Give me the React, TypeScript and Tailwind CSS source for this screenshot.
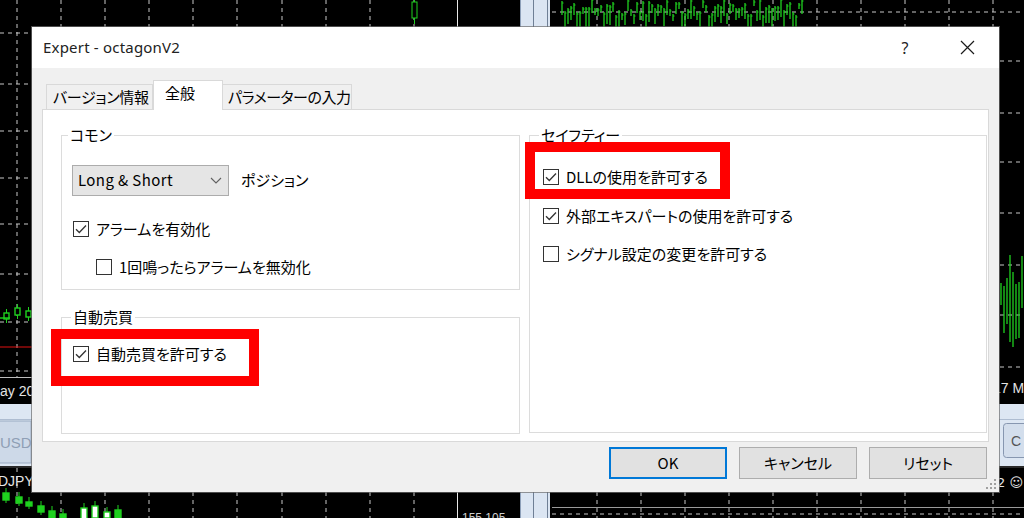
import React from "react";

function cx(...classes: Array<string | false | null | undefined>) {
  return classes.filter(Boolean).join(" ");
}

function rnd(i: number) {
  const x = Math.sin(i * 12.9898 + 78.233) * 43758.5453;
  return x - Math.floor(x);
}

const GRID = "#c8c8c8";
const GREEN = "#1fd11f";

// chart windows behind the dialog (MT4 workspace)
function Backdrop() {
  const leftV = [17, 61, 105, 149, 193, 237, 282, 326, 370, 414];
  const leftH = [33, 84, 131, 178, 224, 274, 322, 371];
  const rightV = [597, 641, 685, 729, 773, 817, 861, 905, 949, 993];
  const rightH = [12, 61, 113, 162, 213, 265, 315, 367];

  const topBars = Array.from({ length: 81 }, (_, i) => {
    const top = Math.round(rnd(i) * 17) - 2;
    const len = 5 + Math.round(rnd(i + 300) * 16);
    return { x: 562 + i * 3, top, bottom: Math.min(27, top + len) };
  });

  const rightBars = Array.from({ length: 9 }, (_, i) => {
    const top = 252 + Math.round(rnd(i + 40) * 40);
    const bottom = 300 + Math.round(rnd(i + 80) * 62);
    return { x: 1001 + i * 3, top, bottom };
  });

  const leftCandles = [
    { x: 4, y: 313, h: 6, fill: "none" },
    { x: 15, y: 308, h: 7, fill: "none" },
    { x: 26, y: 311, h: 6, fill: "none" },
  ];

  const bottomCandles = [
    { x: 3, y: 493, h: 7, fill: GREEN },
    { x: 16, y: 497, h: 6, fill: GREEN },
    { x: 26, y: 502, h: 4, fill: GREEN },
    { x: 38, y: 506, h: 6, fill: GREEN },
    { x: 49, y: 511, h: 7, fill: GREEN },
    { x: 60, y: 514, h: 6, fill: GREEN },
    { x: 81, y: 508, h: 11, fill: "#ffffff" },
    { x: 92, y: 506, h: 12, fill: "#ffffff" },
    { x: 104, y: 512, h: 6, fill: "#ffffff" },
    { x: 115, y: 510, h: 9, fill: GREEN },
  ];

  return (
    <svg
      className="absolute inset-0"
      width="1024"
      height="518"
      viewBox="0 0 1024 518"
      aria-hidden="true"
    >
      <rect width="1024" height="518" fill="#000" />

      {/* left charts grid */}
      {leftV.map((x) => (
        <line key={"lv" + x} x1={x} y1={0} x2={x} y2={377} stroke={GRID} strokeDasharray="4 4" />
      ))}
      {leftV.map((x) => (
        <line key={"lb" + x} x1={x} y1={468} x2={x} y2={518} stroke={GRID} strokeDasharray="4 4" />
      ))}
      {leftH.map((y) => (
        <line key={"lh" + y} x1={0} y1={y} x2={456} y2={y} stroke={GRID} strokeDasharray="4 4" />
      ))}
      <line x1={0} y1={347} x2={456} y2={347} stroke="#e01010" strokeWidth="1.2" />
      <line x1={0} y1={377.5} x2={520} y2={377.5} stroke="#bdbdbd" />
      <line x1={457.5} y1={0} x2={457.5} y2={377} stroke="#e8e8e8" />
      <line x1={457.5} y1={468} x2={457.5} y2={518} stroke="#e8e8e8" />

      {/* candle left top */}
      <line x1={414.5} y1={0} x2={414.5} y2={24} stroke={GREEN} />
      <rect x={412} y={2} width={5} height={16} fill="#000" stroke={GREEN} />

      {leftCandles.map((c) => (
        <g key={"lc" + c.x}>
          <line x1={c.x + 2.5} y1={c.y - 4} x2={c.x + 2.5} y2={c.y + c.h + 4} stroke={GREEN} />
          <rect x={c.x} y={c.y} width={5} height={c.h} fill="#000" stroke={GREEN} strokeWidth="1.4" />
        </g>
      ))}
      <line x1={0} y1={318} x2={10} y2={318} stroke={GREEN} strokeWidth="1.4" />

      {bottomCandles.map((c) => (
        <g key={"bc" + c.x}>
          <line x1={c.x + 3} y1={c.y - 5} x2={c.x + 3} y2={c.y + c.h + 3} stroke={GREEN} />
          <rect x={c.x} y={c.y} width={6} height={c.h} fill={c.fill} stroke={GREEN} strokeWidth="1.4" />
        </g>
      ))}

      <text x={0} y={396} fontFamily="Liberation Sans" fontSize="14" fill="#e4e4e4">
        ay 2021
      </text>
      <text x={-2} y={486} fontFamily="Liberation Sans" fontSize="14" fill="#e4e4e4">
        DJPY,H1
      </text>
      <text x={462} y={522} fontFamily="Liberation Sans" fontSize="12" fill="#d0d0d0">
        155.105
      </text>

      {/* vertical splitter between chart columns */}
      <rect x={520} y={0} width={30} height={518} fill="#dbe5f2" />
      <line x1={520.5} y1={0} x2={520.5} y2={518} stroke="#8d9fb8" />
      <line x1={533.5} y1={0} x2={533.5} y2={518} stroke="#6f7f95" />
      <line x1={547.5} y1={0} x2={547.5} y2={518} stroke="#6f7f95" />

      {/* right charts grid */}
      {rightV.map((x) => (
        <line key={"rv" + x} x1={x} y1={0} x2={x} y2={377} stroke={GRID} strokeDasharray="4 4" />
      ))}
      {rightV.map((x) => (
        <line key={"rb" + x} x1={x} y1={468} x2={x} y2={518} stroke={GRID} strokeDasharray="4 4" />
      ))}
      {rightH.map((y) => (
        <line key={"rh" + y} x1={552} y1={y} x2={1024} y2={y} stroke={GRID} strokeDasharray="4 4" />
      ))}
      <line x1={552} y1={507.5} x2={1024} y2={507.5} stroke="#9a9a9a" />
      <line x1={552} y1={514} x2={1024} y2={514} stroke={GRID} strokeDasharray="4 4" />

      {topBars.map((b) => (
        <g key={"tb" + b.x}>
          <line x1={b.x} y1={b.top} x2={b.x} y2={b.bottom} stroke={GREEN} strokeWidth="1.3" />
          <line x1={b.x} y1={b.top + 2} x2={b.x + 1.5} y2={b.top + 2} stroke={GREEN} />
        </g>
      ))}
      {rightBars.map((b) => (
        <line key={"rb2" + b.x} x1={b.x} y1={b.top} x2={b.x} y2={b.bottom} stroke={GREEN} strokeWidth="1.3" />
      ))}

      <text x={993} y={393} fontFamily="Liberation Sans" fontSize="14" fill="#e4e4e4">
        17 May
      </text>
      <text x={1023} y={487} textAnchor="end" fontFamily="DejaVu Sans" fontSize="13" fill="#e4e4e4">
        V2 ☺
      </text>

      {/* chart tab bar */}
      <rect x={0} y={404} width={1024} height={62} fill="#dde7f3" />
      <line x1={0} y1={419.5} x2={1024} y2={419.5} stroke="#aebdd1" />
      <rect x={-8} y={421} width={39} height={42} fill="#cdd9e8" stroke="#9aabc2" />
      <text x={0} y={448} fontFamily="Liberation Sans" fontSize="15" fill="#8f9fb5">
        USDJ
      </text>
      <rect x={1003.5} y={423.5} width={30} height={34} rx="3" fill="#d3deec" stroke="#8797b0" />
      <text x={1011} y={446} fontFamily="Liberation Sans" fontSize="14" fill="#555">
        C
      </text>
      <rect x={0} y={466} width={1024} height={2} fill="#2a2a2a" />
    </svg>
  );
}

function Check({ label, checked, className }: { label: string; checked?: boolean; className?: string }) {
  return (
    <div className={cx("flex h-[20px] items-center gap-[7px]", className)}>
      <span className="flex h-[16px] w-[16px] shrink-0 items-center justify-center border border-[#333333] bg-white">
        {checked && (
          <svg width="12" height="10" viewBox="0 0 12 10" fill="none" aria-hidden="true">
            <path d="M1 5.2 4.3 8.5 11 1.5" stroke="#333333" strokeWidth="1.3" />
          </svg>
        )}
      </span>
      <span className="whitespace-nowrap text-[15px] leading-[20px] text-black">{label}</span>
    </div>
  );
}

function Group({
  title,
  titleLeft,
  className,
  children,
}: {
  title: string;
  titleLeft: string;
  className?: string;
  children?: React.ReactNode;
}) {
  return (
    <div className={cx("relative border border-[#dcdcdc]", className)}>
      <span
        className={cx(
          "absolute top-[-11px] bg-white px-[2px] text-[15px] leading-[20px] whitespace-nowrap text-black",
          titleLeft
        )}
      >
        {title}
      </span>
      {children}
    </div>
  );
}

function Button({ label, primary }: { label: string; primary?: boolean }) {
  return (
    <div
      className={cx(
        "flex h-[32px] w-[118px] items-center justify-center bg-[#e1e1e1] text-[15px] text-black",
        primary ? "border-2 border-[#0078d7]" : "border border-[#adadad]"
      )}
    >
      {label}
    </div>
  );
}

export default function App() {
  return (
    <div className="relative h-[518px] w-[1024px] overflow-hidden bg-black">
      <Backdrop />

      <div className="absolute left-[32px] top-[27px] flex h-[465px] w-[967px] flex-col bg-[#f0f0f0] font-['Noto_Sans_CJK_JP',sans-serif] shadow-[0_0_0_1px_rgba(110,110,110,0.7)] [font-feature-settings:'palt']">
        {/* title bar */}
        <div className="flex h-[41px] shrink-0 items-center bg-white pl-[11px]">
          <span className="font-['Noto_Sans',sans-serif] text-[15px] tracking-[0.2px] text-[#222222]">Expert - octagonV2</span>
          <div className="ml-auto mr-[1px] flex h-full items-center">
            <span className="flex w-[62px] justify-center font-['Noto_Sans',sans-serif] text-[16px] text-[#222222]">?</span>
            <span className="flex w-[62px] justify-center">
              <svg width="15" height="15" viewBox="0 0 15 15" aria-hidden="true">
                <path d="M1 1 14 14M14 1 1 14" stroke="#1a1a1a" strokeWidth="1.2" />
              </svg>
            </span>
          </div>
        </div>

        {/* tabs */}
        <div className="relative z-10 mt-[12px] flex h-[30px] items-end pl-[14px]">
          <div className="mb-[1px] flex h-[25px] w-[107px] items-center whitespace-nowrap border border-b-0 border-[#d9d9d9] pl-[6px] text-[15px] tracking-[-0.3px] text-black">
            バージョン情報
          </div>
          <div className="flex h-[30px] w-[70px] items-center border border-b-0 border-[#d9d9d9] bg-white pb-[4px] pl-[11px] text-[15px] text-black">
            全般
          </div>
          <div className="mb-[1px] flex h-[25px] w-[129px] items-center overflow-hidden whitespace-nowrap border border-b-0 border-l-0 border-[#d9d9d9] pl-[5px] text-[15px] tracking-[-0.5px] text-black">
            パラメーターの入力
          </div>
        </div>

        {/* tab panel */}
        <div className="mx-[10px] -mt-[1px] h-[333px] shrink-0 border border-[#d9d9d9] bg-white">
          <div className="grid grid-cols-[459px_458px] gap-x-[9px] pl-[18px] pt-[25px]">
            <div className="flex flex-col">
              <Group title="コモン" titleLeft="left-[6px]" className="h-[155px] pl-[10px] pt-[29px]">
                <div className="flex items-center gap-[12px]">
                  <div className="flex h-[31px] w-[157px] items-center border border-[#acacac] bg-[#e5e5e5] pl-[5px] pr-[6px]">
                    <span className="text-[15px] tracking-[0.4px] text-black">Long &amp; Short</span>
                    <svg className="ml-auto" width="12" height="7" viewBox="0 0 12 7" fill="none" aria-hidden="true">
                      <path d="M1 1 6 6 11 1" stroke="#606060" strokeWidth="1.1" />
                    </svg>
                  </div>
                  <span className="text-[15px] text-black">ポジション</span>
                </div>
                <Check label="アラームを有効化" checked className="ml-[1px] mt-[23px]" />
                <Check label="1回鳴ったらアラームを無効化" className="ml-[24px] mt-[18px]" />
              </Group>

              <Group title="自動売買" titleLeft="left-[9px]" className="mt-[27px] h-[117px] pl-[11px] pt-[26px]">
                <Check label="自動売買を許可する" checked />
              </Group>
            </div>

            <Group title="セイフティー" titleLeft="left-[9px]" className="h-[298px] pl-[13px] pt-[31px]">
              <Check label="DLLの使用を許可する" checked />
              <Check label="外部エキスパートの使用を許可する" checked className="mt-[19px]" />
              <Check label="シグナル設定の変更を許可する" className="mt-[18px]" />
            </Group>
          </div>
        </div>

        {/* buttons */}
        <div className="mt-[5px] flex justify-end gap-[12px] pr-[12px]">
          <Button label="OK" primary />
          <Button label="キャンセル" />
          <Button label="リセット" />
        </div>

        {/* size grip */}
        <svg className="absolute bottom-[3px] right-[3px]" width="10" height="10" viewBox="0 0 10 10" aria-hidden="true">
          {[
            [8, 0],
            [8, 4],
            [4, 4],
            [8, 8],
            [4, 8],
            [0, 8],
          ].map(([x, y]) => (
            <rect key={x + "-" + y} x={x} y={y} width="2" height="2" fill="#a0a0a0" />
          ))}
        </svg>

        {/* red annotation frames */}
        <div className="pointer-events-none absolute left-[19px] top-[302px] h-[57px] w-[208px] border-[10px] border-[#ff0000]" />
        <div className="pointer-events-none absolute left-[493px] top-[115px] h-[57px] w-[205px] border-[10px] border-[#ff0000]" />
      </div>
    </div>
  );
}
